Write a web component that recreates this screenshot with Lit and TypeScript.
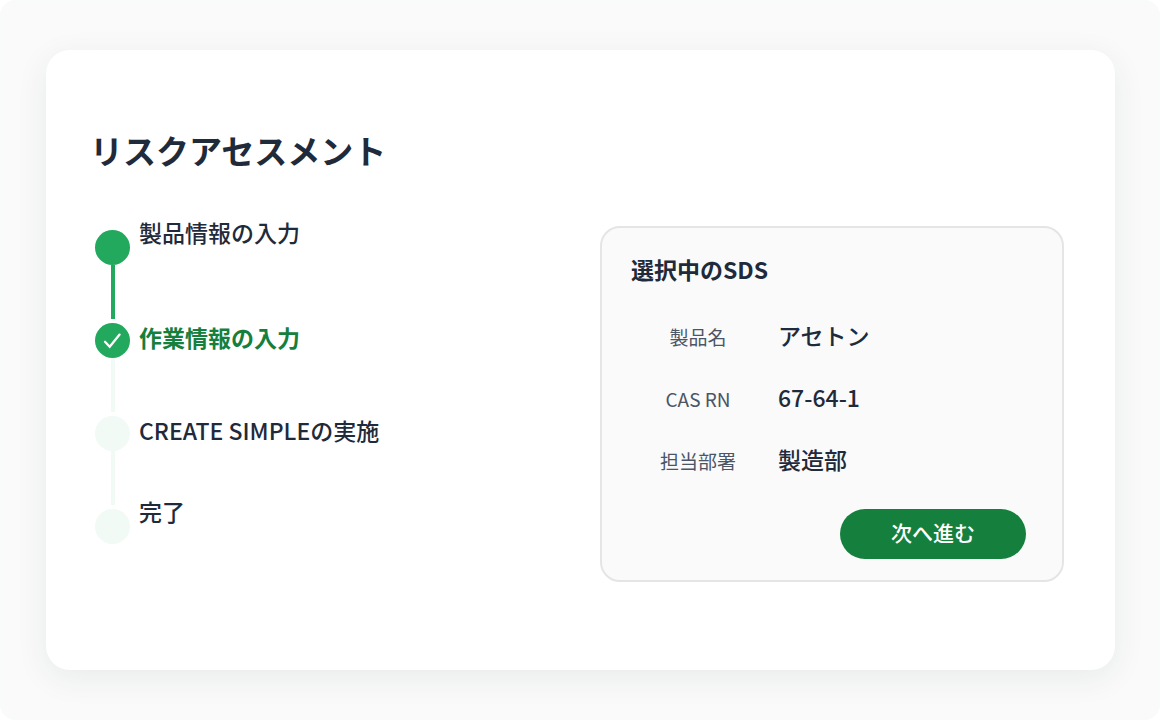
import { LitElement, html, css, nothing } from "lit";
import { customElement } from "lit/decorators.js";
import { classMap } from "lit/directives/class-map.js";

interface Step {
  label: string;
  state: "done" | "current" | "todo";
}

const STEPS: Step[] = [
  { label: "製品情報の入力", state: "done" },
  { label: "作業情報の入力", state: "current" },
  { label: "CREATE SIMPLEの実施", state: "todo" },
  { label: "完了", state: "todo" },
];

const DETAILS = [
  { name: "製品名", value: "アセトン" },
  { name: "CAS RN", value: "67-64-1" },
  { name: "担当部署", value: "製造部" },
];

@customElement("app-root")
export class AppRoot extends LitElement {
  static styles = css`
    :host {
      display: block;
      font-family: "Noto Sans CJK JP", sans-serif;
      font-size: 23px;
      font-weight: 500;
      color: #1f2a3a;
      background: #fff;
    }
    * {
      box-sizing: border-box;
    }
    .page {
      min-height: 100vh;
      padding: 50px 45px 50px 46px;
      display: flex;
      background: #fafafa;
      border-radius: 16px;
      box-shadow: inset 0 0 0 1px #f7fbf9;
    }
    .card {
      flex: 1;
      padding: 72px 51px 48px 44px;
      border-radius: 24px;
      background: #fff;
      box-shadow: 0 8px 32px rgba(31, 50, 45, 0.08);
    }
    .title {
      margin: 0 0 48px;
      font-size: 33px;
      line-height: 56px;
      font-weight: 700;
    }
    .content {
      display: grid;
      grid-template-columns: minmax(0, 510fr) minmax(0, 464fr);
      align-items: start;
    }
    .steps {
      list-style: none;
      margin: 0;
      padding: 0 0 0 5px;
    }
    .step {
      display: flex;
      gap: 9px;
      min-height: 93px;
    }
    .rail {
      width: 35px;
      padding-top: 4px;
      display: flex;
      flex-direction: column;
      align-items: center;
    }
    .marker {
      width: 35px;
      height: 35px;
      border-radius: 50%;
      background: #f1faf5;
      display: grid;
      place-items: center;
    }
    .line {
      flex: 1;
      width: 4px;
      background: #f1faf5;
    }
    .filled {
      background: #22a95d;
    }
    .label {
      line-height: 36px;
    }
    .label.end {
      line-height: 12px;
    }
    .label.current {
      color: #15803d;
      font-weight: 700;
    }
    .panel {
      padding: 25px 36px 21px 29px;
      border: 2px solid #e5e5e5;
      border-radius: 20px;
      background: #fafafa;
    }
    .heading {
      margin: 0 0 20px;
      font-size: 23px;
      line-height: 32px;
      font-weight: 700;
    }
    .details {
      width: 100%;
      border-collapse: collapse;
    }
    .details th {
      width: 134px;
      height: 62px;
      padding: 0;
      font-size: 19px;
      font-weight: 400;
      text-align: center;
      color: #4b5565;
    }
    .details td {
      padding: 0 0 2px 13px;
    }
    .actions {
      display: flex;
      justify-content: flex-end;
      margin-top: 18px;
    }
    .next {
      width: 186px;
      height: 50px;
      padding: 0 0 4px;
      border: 0;
      border-radius: 25px;
      background: #15803d;
      color: #fff;
      font: inherit;
      font-size: 21px;
      cursor: pointer;
    }
  `;

  private renderStep(step: Step, index: number) {
    const first = index === 0;
    const last = index === STEPS.length - 1;
    const current = step.state === "current";
    return html`
      <li class="step" aria-current=${current ? "step" : nothing}>
        <span class="rail">
          <span class=${classMap({ marker: true, filled: step.state !== "todo" })}>
            ${current
              ? html`<svg width="19" height="19" viewBox="0 0 19 19" fill="none" aria-hidden="true">
                  <path d="M2 10.8 L6.7 15.7 L16.6 3.6" stroke="#fff" stroke-width="2.3" stroke-linecap="round" stroke-linejoin="miter" />
                </svg>`
              : nothing}
          </span>
          ${last ? nothing : html`<span class=${classMap({ line: true, filled: step.state === "done" })}></span>`}
        </span>
        <span class=${classMap({ label: true, end: first || last, current })}>${step.label}</span>
      </li>
    `;
  }

  render() {
    return html`
      <div class="page">
        <main class="card">
          <h1 class="title">リスクアセスメント</h1>
          <div class="content">
            <ol class="steps">
              ${STEPS.map((step, index) => this.renderStep(step, index))}
            </ol>
            <section class="panel" aria-labelledby="sds">
              <h2 class="heading" id="sds">選択中のSDS</h2>
              <table class="details">
                <tbody>
                  ${DETAILS.map(
                    (row) => html`<tr>
                      <th scope="row">${row.name}</th>
                      <td>${row.value}</td>
                    </tr>`,
                  )}
                </tbody>
              </table>
              <div class="actions">
                <button class="next" type="button">次へ進む</button>
              </div>
            </section>
          </div>
        </main>
      </div>
    `;
  }
}
